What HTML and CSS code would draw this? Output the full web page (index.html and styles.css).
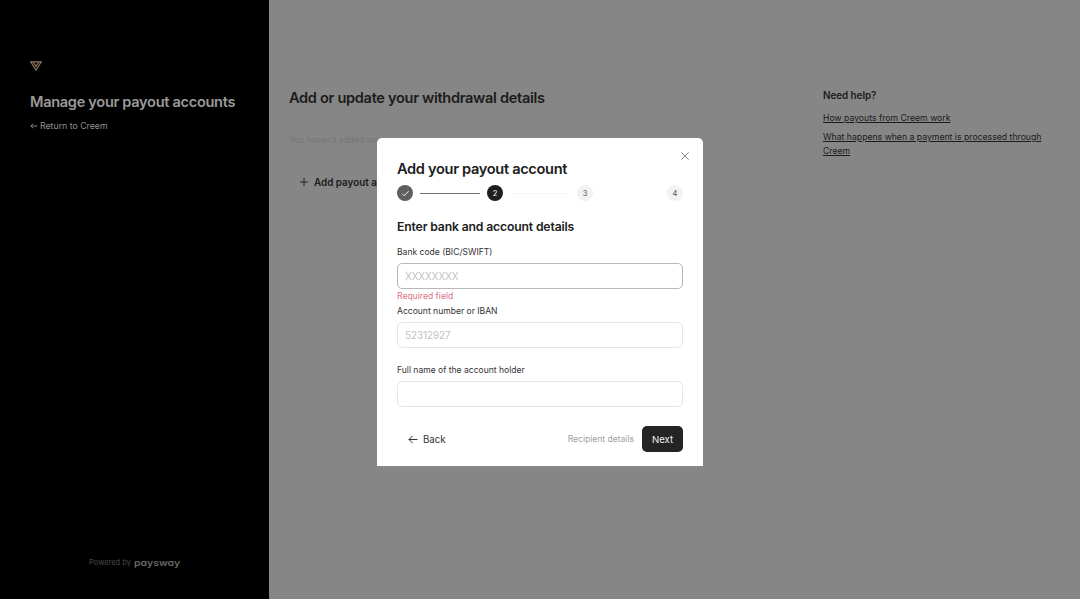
FILE: index.html
```html
<!DOCTYPE html>
<html lang="en">
<head>
<meta charset="utf-8">
<title>Manage your payout accounts</title>
<link rel="stylesheet" href="styles.css">
</head>
<body>
<div class="page">
  <aside class="sidebar">
    <svg class="logo" width="12" height="10" viewBox="0 0 12 10" fill="none" stroke="currentColor" stroke-width="1.1"><path d="M.8.9h10.4L6 9.2zM3.2 1l2.8 4.6L8.8 1"/></svg>
    <h1 class="side-title"><span>Manage your payout accounts</span></h1>
    <a class="return"><svg width="8" height="8" viewBox="0 0 8 8" fill="none" stroke="currentColor" stroke-width=".9"><path d="M7.4 4H.9M3.2 1.7.9 4l2.3 2.3"/></svg><span>Return to Creem</span></a>
    <div class="powered"><span>Powered by</span><span class="brand">paysway</span></div>
  </aside>
  <main class="main">
    <h2 class="main-title"><span>Add or update your withdrawal details</span></h2>
    <p class="empty">You haven't added any payout accounts</p>
    <button class="add"><svg width="8" height="8" viewBox="0 0 8 8" stroke="currentColor" stroke-width=".9"><path d="M4 0v8M0 4h8"/></svg><span>Add payout account</span></button>
  </main>
  <section class="help">
    <h3 class="help-title"><span>Need help?</span></h3>
    <a class="help-link"><span>How payouts from Creem work</span></a>
    <a class="help-link"><span>What happens when a payment is processed through Creem</span></a>
  </section>
</div>
<div class="modal" role="dialog">
  <svg class="close" width="8" height="8" viewBox="0 0 8 8" stroke="currentColor" stroke-width=".9"><path d="m.4.4 7.2 7.2M7.6.4.4 7.6"/></svg>
  <h2 class="modal-title"><span>Add your payout account</span></h2>
  <div class="steps">
    <span class="step done"><svg width="9" height="9" viewBox="0 0 9 9" fill="none" stroke="currentColor" stroke-width=".9"><path d="m1.2 4.8 2 2 4.4-4.6"/></svg></span>
    <span class="line line-done"></span>
    <span class="step current">2</span>
    <span class="line"></span>
    <span class="step next">3</span>
    <span class="line line-hidden"></span>
    <span class="step next">4</span>
  </div>
  <h3 class="form-title"><span>Enter bank and account details</span></h3>
  <label class="label"><span>Bank code (BIC/SWIFT)</span></label>
  <div class="field active"><span>XXXXXXXX</span></div>
  <div class="error"><span>Required field</span></div>
  <label class="label label-account"><span>Account number or IBAN</span></label>
  <div class="field"><span>52312927</span></div>
  <label class="label label-name"><span>Full name of the account holder</span></label>
  <div class="field"></div>
  <div class="actions">
    <button class="back"><svg width="10" height="9" viewBox="0 0 10 9" fill="none" stroke="currentColor"><path d="M9.4 4.5H1M4.6.9 1 4.5l3.6 3.6"/></svg><span>Back</span></button>
    <span class="hint">Recipient details</span>
    <button class="submit">Next</button>
  </div>
</div>
</body>
</html>
```
FILE: styles.css
```css
* { box-sizing: border-box; }
body { margin: 0; font-family: Inter, "Liberation Sans", sans-serif; color: #202020; }
h1, h2, h3, p { margin: 0; font-weight: 600; }
svg { display: block; flex: none; }
button { border: 0; padding: 0; background: none; font: inherit; color: inherit; }
.page { display: grid; grid-template-columns: 269px 554px 1fr; height: 599px; overflow: hidden; background: #868686; }

.sidebar { display: flex; flex-direction: column; background: #000; color: #9a9a9a; padding: 61px 30px 29px; }
.logo { color: #8d745b; }
.side-title, .main-title, .modal-title { font-size: 14.6px; line-height: 20px; letter-spacing: -.32px; white-space: nowrap; }
.side-title { margin-top: 21px; }
.return { display: flex; align-items: center; gap: 2px; margin-top: 7px; font-size: 8.75px; line-height: 14px; color: #929292; }
.powered { display: flex; justify-content: center; align-items: center; gap: 3px; margin-top: auto; font-size: 7.5px; line-height: 14px; color: #484848; }
.brand { width: 46px; font-size: 9px; font-weight: 600; color: #686868; font-feature-settings: "cv11"; transform: scaleX(1.16); transform-origin: left; }

.main { padding: 88px 0 0 20px; color: #1b1b1b; }
.main-title { margin-bottom: 25px; }
.empty { font-size: 8.5px; font-weight: 400; line-height: 14px; color: #767676; }
.add { display: flex; align-items: center; gap: 6px; margin: 28px 0 0 11px; font-size: 9.9px; font-weight: 600; line-height: 14px; }

.help { padding: 89px 30px 0 0; color: #1b1b1b; }
.help-title { font-size: 9.8px; line-height: 14px; margin-bottom: 8px; }
.help-link { display: block; margin-bottom: 5px; font-size: 8.68px; line-height: 14px; text-decoration: underline; text-underline-offset: 1px; }

.modal { position: absolute; left: 377px; top: 138px; width: 326px; height: 328px; padding: 20px 20px 0; background: #fff; border-radius: 5px 5px 0 0; }
.close { position: absolute; right: 14px; top: 13.5px; color: #777; }
.modal-title { padding-top: 1px; }
.steps { display: flex; align-items: center; justify-content: space-between; margin-top: 6px; height: 16px; }
.step { display: flex; align-items: center; justify-content: center; width: 16px; height: 16px; border-radius: 50%; font-size: 7.5px; line-height: 16px; }
.done { background: #606060; color: #fff; }
.current, .next { padding-top: 1px; }
.current { background: #1e1e1e; color: #fff; }
.next { background: #f2f2f2; color: #555; }
.line { width: 60px; height: 1px; background: #f7f7f7; }
.line-done { background: #707070; }
.line-hidden { background: none; }
.form-title { margin-top: 17px; font-size: 12.2px; line-height: 18px; letter-spacing: -.15px; }
.label { display: block; margin-top: 9px; font-size: 8.55px; line-height: 14px; color: #333; }
.field { display: flex; align-items: center; height: 26px; margin-top: 4px; padding: 2px 7px 0; border: 1px solid #e6e6e6; border-radius: 5px; font-size: 9.8px; line-height: 14px; color: #c2c2c2; }
.field.active { border-color: #b8b8b8; }
.error { font-size: 8.6px; line-height: 14px; color: #dc7183; }
.label-account { margin-top: 1px; }
.label-name { margin-top: 15px; }
.actions { display: flex; align-items: center; height: 26px; margin-top: 19px; }
.back { display: flex; align-items: center; gap: 5px; margin-left: 11px; font-size: 9.7px; color: #333; }
.hint { margin-left: auto; font-size: 8.55px; color: #a0a0a0; }
.submit { width: 41px; height: 26px; margin-left: 8px; border-radius: 5px; background: #242424; color: #f1f1f1; font-size: 9.6px; }
```
